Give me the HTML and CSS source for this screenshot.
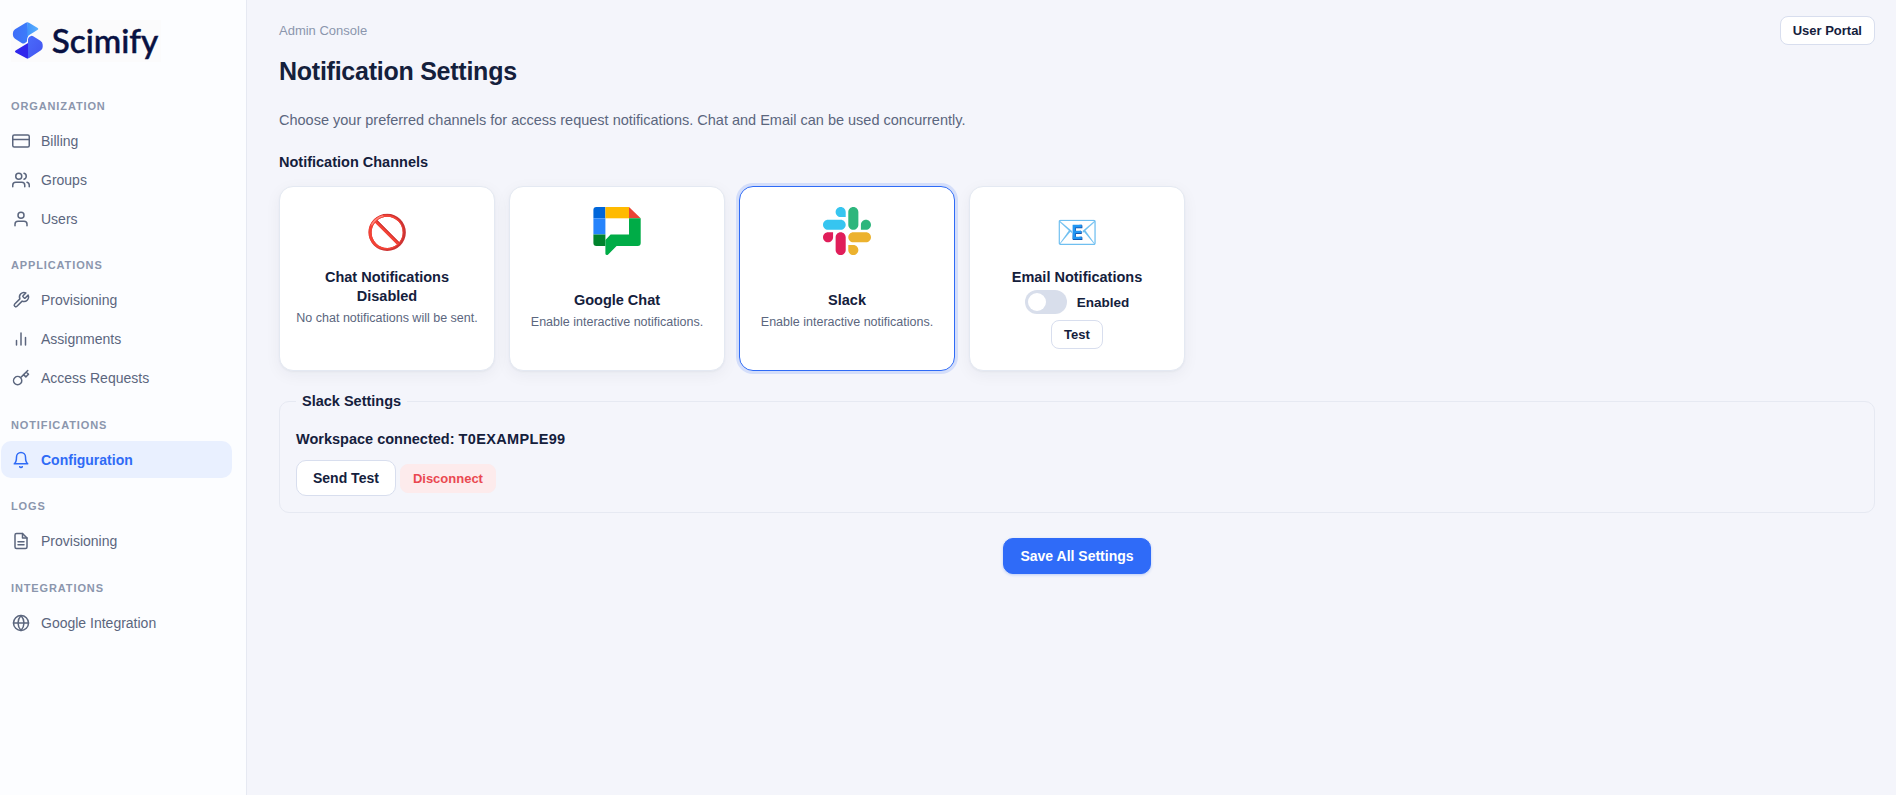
FILE: index.html
```html
<!DOCTYPE html>
<html lang="en">
<head>
<meta charset="utf-8">
<title>Notification Settings</title>
<link rel="stylesheet" href="styles.css">
</head>
<body>
<div class="app">
  <aside class="sidebar">
    <svg class="logo" width="150" height="42" viewBox="0 0 150 42" role="img" aria-label="Scimify">
      <defs>
        <linearGradient id="g1" x1="0" y1="0" x2="1" y2="0"><stop offset="0" stop-color="#3f6df8"/><stop offset="1" stop-color="#3b7dfb"/></linearGradient>
        <linearGradient id="g2" x1="0" y1="0" x2="1" y2="0"><stop offset="0" stop-color="#4193fb"/><stop offset="1" stop-color="#5bb0fe"/></linearGradient>
        <linearGradient id="g3" x1="0" y1="0" x2="1" y2="1"><stop offset="0" stop-color="#4a6bfb"/><stop offset="1" stop-color="#4254f0"/></linearGradient>
      </defs>
      <rect width="150" height="42" fill="#fbfbfc"/>
      <path d="M16.5 2.2Q15.6 2.3 14.8 2.8L4 9.3Q1.9 10.8 1.9 13.3V15Q2 17.4 4 18.7L11 23.2Q12.4 24 13.6 23.2L15.8 21.8Q15.8 17.8 17.4 15.4Z" fill="url(#g1)"/>
      <path d="M16.3 2.2Q17.2 2.2 18 2.7L26.7 8Q28.1 8.9 26.7 9.8L16.3 16.2Z" fill="url(#g2)"/>
      <path d="M17 23.2V19Q17.6 16.4 20 15.9Q21.4 15.7 22.6 16.4L29.4 20.7Q31.7 22.3 31.7 24.8V27Q31.6 29.3 29.6 30.6L18.6 37.8Q17.7 38.5 16.6 38.6Z" fill="url(#g3)"/>
      <path d="M17 23V38.6Q16 38.6 15 38L4.6 32.5Q3.2 31.5 4.6 30.5Z" fill="#3127ec"/>
      <text class="wordmark" x="40.8" y="33.2" textLength="106.5" lengthAdjust="spacingAndGlyphs">Scimify</text>
    </svg>
    <nav>
      <section class="group">
        <h2>Organization</h2>
        <a class="item"><svg viewBox="0 0 24 24"><rect x="1" y="4" width="22" height="16" rx="2"/><path d="M1 10h22"/></svg>Billing</a>
        <a class="item"><svg viewBox="0 0 24 24"><path d="M17 21v-2a4 4 0 0 0-4-4H5a4 4 0 0 0-4 4v2"/><circle cx="9" cy="7" r="4"/><path d="M23 21v-2a4 4 0 0 0-3-3.87M16 3.13a4 4 0 0 1 0 7.75"/></svg>Groups</a>
        <a class="item"><svg viewBox="0 0 24 24"><path d="M20 21v-2a4 4 0 0 0-4-4H8a4 4 0 0 0-4 4v2"/><circle cx="12" cy="7" r="4"/></svg>Users</a>
      </section>
      <section class="group">
        <h2>Applications</h2>
        <a class="item"><svg viewBox="0 0 24 24"><path d="M14.7 6.3a1 1 0 0 0 0 1.4l1.6 1.6a1 1 0 0 0 1.4 0l3.77-3.77a6 6 0 0 1-7.94 7.94l-6.91 6.91a2.12 2.12 0 0 1-3-3l6.91-6.91a6 6 0 0 1 7.94-7.94l-3.76 3.76z"/></svg>Provisioning</a>
        <a class="item"><svg viewBox="0 0 24 24"><path d="M18 20V10M12 20V4M6 20v-6"/></svg>Assignments</a>
        <a class="item"><svg viewBox="0 0 24 24"><path d="M21 2l-2 2m-7.61 7.61a5.5 5.5 0 1 1-7.778 7.778 5.5 5.5 0 0 1 7.777-7.777zm0 0L15.5 7.5m0 0l3 3L22 7l-3-3m-3.5 3.5L19 4"/></svg>Access Requests</a>
      </section>
      <section class="group">
        <h2>Notifications</h2>
        <a class="item active"><svg viewBox="0 0 24 24"><path d="M18 8A6 6 0 0 0 6 8c0 7-3 9-3 9h18s-3-2-3-9M13.73 21a2 2 0 0 1-3.46 0"/></svg>Configuration</a>
      </section>
      <section class="group">
        <h2>Logs</h2>
        <a class="item"><svg viewBox="0 0 24 24"><path d="M14 2H6a2 2 0 0 0-2 2v16a2 2 0 0 0 2 2h12a2 2 0 0 0 2-2V8z"/><path d="M14 2v6h6M16 13H8M16 17H8"/></svg>Provisioning</a>
      </section>
      <section class="group">
        <h2>Integrations</h2>
        <a class="item"><svg viewBox="0 0 24 24"><circle cx="12" cy="12" r="10"/><path d="M2 12h20M12 2a15.3 15.3 0 0 1 4 10 15.3 15.3 0 0 1-4 10 15.3 15.3 0 0 1-4-10 15.3 15.3 0 0 1 4-10z"/></svg>Google Integration</a>
      </section>
    </nav>
  </aside>
  <main class="main">
    <header class="topbar">
      <span class="crumb">Admin Console</span>
      <button class="btn small">User Portal</button>
    </header>
    <h1>Notification Settings</h1>
    <p class="intro">Choose your preferred channels for access request notifications. Chat and Email can be used concurrently.</p>
    <h3 class="label">Notification Channels</h3>
    <div class="cards">
      <article class="card">
        <div class="emoji">🚫</div>
        <h4>Chat Notifications Disabled</h4>
        <p>No chat notifications will be sent.</p>
      </article>
      <article class="card">
        <div class="brand"><svg width="48" height="48" viewBox="-0.4 0 48 48">
          <path d="M12 0H3Q0 0 0 3V11.3H12Z" fill="#0066da"/>
          <path d="M0 11.3H12V27.5H0Z" fill="#2684fc"/>
          <path d="M0 27.5H12V39H3Q0 39 0 36Z" fill="#00832d"/>
          <path d="M12 0H35.6V11.3H12Z" fill="#ffba00"/>
          <path d="M35.6 0L47.3 11.3H35.6Z" fill="#ea4335"/>
          <path d="M35.6 11.3H47.3V36Q47.3 39 44.3 39H23.2L14.8 47.4Q13.8 48.2 12.6 47.8Q12 47.4 12 46.6V33L17.2 27.5H35.6Z" fill="#00ac47"/>
        </svg></div>
        <h4>Google Chat</h4>
        <p>Enable interactive notifications.</p>
      </article>
      <article class="card selected">
        <div class="brand"><svg width="48" height="48" viewBox="0 0 122.8 122.8">
          <path d="M25.8 77.6c0 7.1-5.8 12.9-12.9 12.9S0 84.7 0 77.6s5.8-12.9 12.9-12.9h12.9v12.9zm6.5 0c0-7.1 5.8-12.9 12.9-12.9s12.9 5.8 12.9 12.9v32.3c0 7.1-5.8 12.9-12.9 12.9s-12.9-5.8-12.9-12.9V77.6z" fill="#e01e5a"/>
          <path d="M45.2 25.8c-7.1 0-12.9-5.8-12.9-12.9S38.1 0 45.2 0s12.9 5.8 12.9 12.9v12.9H45.2zm0 6.5c7.1 0 12.9 5.8 12.9 12.9s-5.8 12.9-12.9 12.9H12.9C5.8 58.1 0 52.3 0 45.2s5.8-12.9 12.9-12.9h32.3z" fill="#36c5f0"/>
          <path d="M97 45.2c0-7.1 5.8-12.9 12.9-12.9s12.9 5.8 12.9 12.9-5.8 12.9-12.9 12.9H97V45.2zm-6.5 0c0 7.1-5.8 12.9-12.9 12.9s-12.9-5.8-12.9-12.9V12.9C64.7 5.8 70.5 0 77.6 0s12.9 5.8 12.9 12.9v32.3z" fill="#2eb67d"/>
          <path d="M77.6 97c7.1 0 12.9 5.8 12.9 12.9s-5.8 12.9-12.9 12.9-12.9-5.8-12.9-12.9V97h12.9zm0-6.5c-7.1 0-12.9-5.8-12.9-12.9s5.8-12.9 12.9-12.9h32.3c7.1 0 12.9 5.8 12.9 12.9s-5.8 12.9-12.9 12.9H77.6z" fill="#ecb22e"/>
        </svg></div>
        <h4>Slack</h4>
        <p>Enable interactive notifications.</p>
      </article>
      <article class="card">
        <div class="emoji">📧</div>
        <h4>Email Notifications</h4>
        <div class="switch-row"><span class="switch"></span>Enabled</div>
        <button class="btn small">Test</button>
      </article>
    </div>
    <fieldset class="panel">
      <legend>Slack Settings</legend>
      <div class="workspace">Workspace connected: <span class="workspace-id">T0EXAMPLE99</span></div>
      <div class="actions">
        <button class="btn">Send Test</button>
        <button class="btn small danger">Disconnect</button>
      </div>
    </fieldset>
    <button class="btn primary">Save All Settings</button>
  </main>
</div>
</body>
</html>
```
FILE: styles.css
```css
* { box-sizing: border-box; }
body {
  margin: 0;
  font-family: "Liberation Sans", Arial, sans-serif;
  font-size: 14.5px;
  color: #14203c;
  background: #f4f5fb;
}
h1, h2, h3, h4, p { margin: 0; }
.app { display: flex; height: 795px; }

.sidebar {
  width: 247px;
  flex: none;
  padding: 20px 14px 0 1px;
  background: #fcfdff;
  border-right: 1px solid #e6e9f2;
}
.logo { display: block; margin: 0 0 35.5px 10px; }
.wordmark {
  font: 500 32px Lato, sans-serif;
  fill: #081142;
  stroke: #081142;
  stroke-width: 0.5px;
}
.group { margin-bottom: 20px; }
.group h2 {
  height: 16px;
  margin: 0 0 8.5px 10px;
  font-size: 11px;
  line-height: 16px;
  letter-spacing: 0.88px;
  text-transform: uppercase;
  color: #8b96ad;
}
.item {
  display: flex;
  align-items: center;
  gap: 11px;
  height: 37px;
  padding: 0 11px;
  border-radius: 10px;
  font-size: 14px;
  color: #5b667e;
}
.item + .item { margin-top: 2px; }
.item svg {
  width: 18px;
  height: 18px;
  overflow: visible;
  fill: none;
  stroke: currentColor;
  stroke-width: 2;
  stroke-linecap: round;
  stroke-linejoin: round;
}
.item.active { background: #e9f0ff; color: #2f6bf6; font-weight: 700; }

.main {
  flex: 1;
  display: flex;
  flex-direction: column;
  padding: 16px 21px 0 32px;
}
.topbar { display: flex; justify-content: space-between; align-items: center; height: 29px; }
.crumb { font-size: 13px; color: #8b96ad; }
h1 { margin-top: 11px; font-size: 25px; line-height: 30px; letter-spacing: -0.25px; }
.intro { margin-top: 24px; line-height: 20px; color: #5b667e; }
.label { margin-top: 22px; font-size: 14.5px; line-height: 20px; }

.cards {
  display: grid;
  grid-template-columns: repeat(4, 216px);
  gap: 14px;
  margin-top: 14px;
}
.card {
  display: flex;
  flex-direction: column;
  align-items: center;
  height: 185px;
  padding: 20px 14px;
  text-align: center;
  background: #fff;
  border: 1px solid #e4e9f2;
  border-radius: 14px;
  box-shadow: 0 1px 2px rgba(20, 32, 60, 0.04), 0 4px 16px rgba(20, 32, 60, 0.05);
}
.card.selected { border-color: #2f6bf6; box-shadow: 0 0 0 3px rgba(47, 107, 246, 0.16); }
.emoji { height: 60.5px; font-size: 34px; line-height: 51px; }
.brand { height: 83.5px; }
.card h4 { font-size: 14.5px; line-height: 19px; }
.card p { margin-top: 3px; font-size: 12.5px; line-height: 18px; color: #5b667e; white-space: nowrap; }
.switch-row {
  display: flex;
  align-items: center;
  gap: 10px;
  margin: 3.5px 0 6px;
  font-size: 13.5px;
  font-weight: 700;
}
.switch { width: 42px; height: 24px; padding: 3px; border-radius: 12px; background: #d8deeb; }
.switch::before { content: ""; display: block; width: 18px; height: 18px; border-radius: 50%; background: #fff; }

.btn {
  flex: none;
  height: 36px;
  padding: 0 16px;
  font: 700 14px "Liberation Sans", Arial, sans-serif;
  color: #14203c;
  background: #fff;
  border: 1px solid #d8deee;
  border-radius: 10px;
}
.btn.small { height: 29px; padding: 0 12px; font-size: 13px; border-radius: 8px; }
.btn.danger { color: #ea4850; background: #fdebec; border-color: #fdebec; }
.btn.primary {
  align-self: center;
  width: 148px;
  margin-top: 25px;
  padding: 0;
  color: #fff;
  background: #2f6bf8;
  border-color: #2f6bf8;
  box-shadow: 0 1px 3px rgba(47, 107, 246, 0.3);
}

.panel {
  min-width: 0;
  height: 122px;
  margin: 20px 0 0;
  padding: 19px 16px 0;
  border: 1px solid #e6e9f2;
  border-radius: 10px;
}
.panel legend { padding: 0 6px; line-height: 20px; font-weight: 700; }
.workspace { line-height: 18px; font-weight: 700; }
.workspace-id { letter-spacing: 0.35px; }
.actions { display: flex; align-items: center; gap: 4px; margin-top: 12px; }
```
